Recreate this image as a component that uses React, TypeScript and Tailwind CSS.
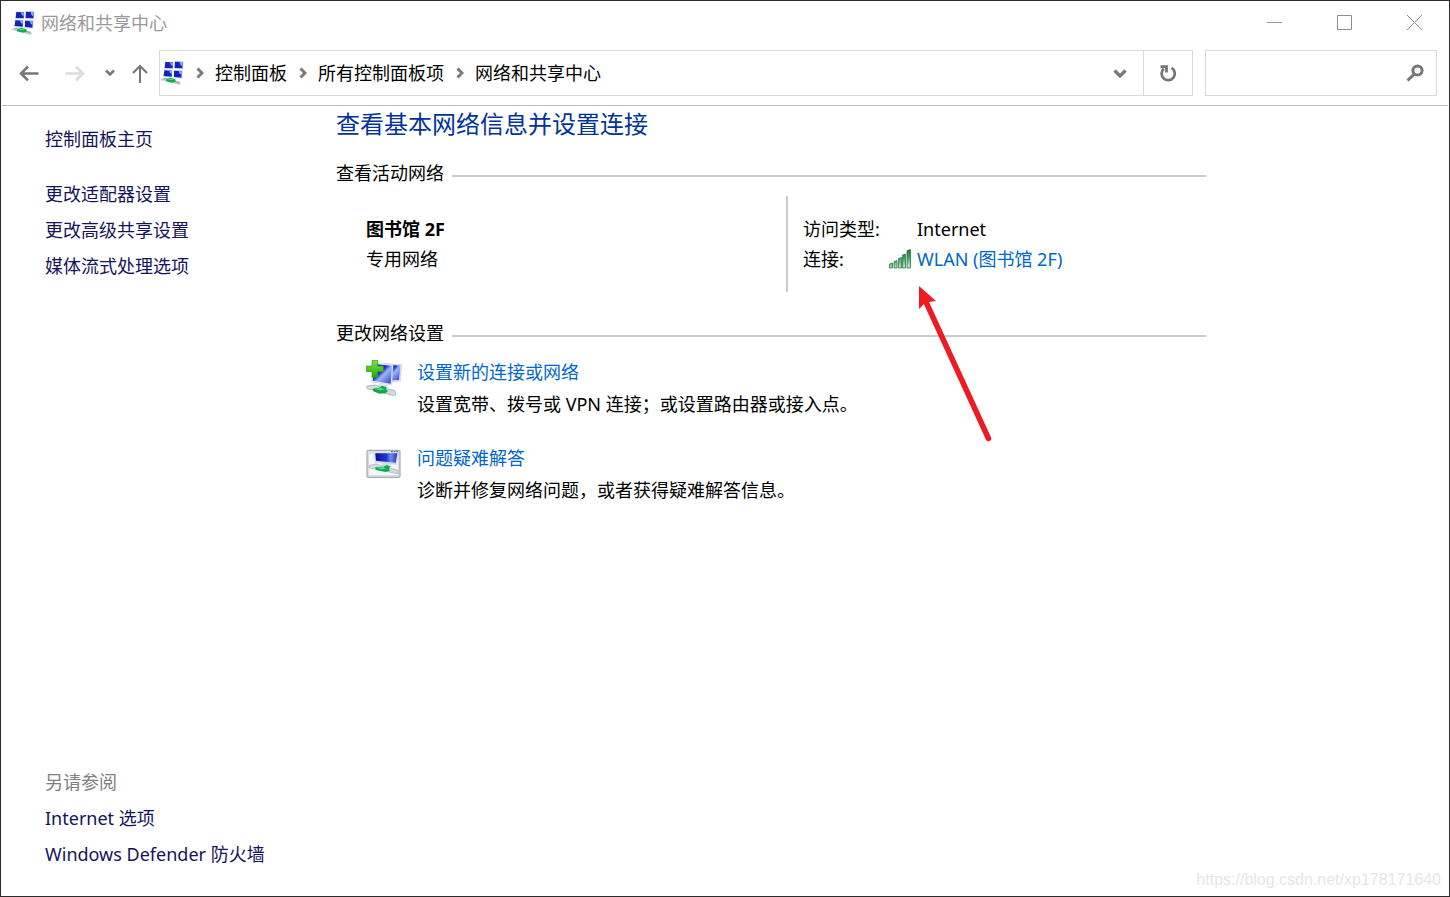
import type { ReactNode } from 'react';

const sideLinks = ['更改适配器设置', '更改高级共享设置', '媒体流式处理选项'];
const seeAlso = ['Internet 选项', 'Windows Defender 防火墙'];
const crumbs = ['控制面板', '所有控制面板项', '网络和共享中心'];

const tasks = [
    { title: '设置新的连接或网络', text: '设置宽带、拨号或 VPN 连接；或设置路由器或接入点。', icon: <NewConnectionIcon /> },
    { title: '问题疑难解答', text: '诊断并修复网络问题，或者获得疑难解答信息。', icon: <TroubleshootIcon /> },
];

function NetworkIcon() {
    return (
        <svg viewBox="0 0 69 72" className="h-6 w-[23px] shrink-0" aria-hidden="true">
            <g fill="#dbe3f3">
                <path d="M11 1l27 2-1 22-28-1zM40 0h28l-2 25-27-1zM9 25l26 2-1 24-28-2zM38 27l28 1-2 25-27-2z" />
            </g>
            <g fill="#1422b8">
                <path d="M13 3l23 1-1 18-24-1zM42 2l24 1-2 19-23-1zM10 28l23 1-1 18-24-2zM39 29l24 1-2 20-22-2z" />
            </g>
            <g fill="#8aa5ee">
                <path d="M27 4l9 1-1 11c-5-2-8-6-8-12zM56 2l10 1-2 13c-5-2-8-7-8-14zM24 28l9 1-1 11c-4-2-8-6-8-12zM53 30l10 1-1 11c-5-2-9-6-9-12z" />
            </g>
            <path d="M0 53l14-3 8 4-3 7-18-3z" fill="#c3caca" />
            <path d="M38 57l20 5 1 8-6 2-19-7z" fill="#c3caca" />
            <path d="M6 53l8-1 3 2-8 1zM46 61l8 2v3l-8-2z" fill="#8e9a9c" />
            <path d="M16 54l13-4 14 5 1 7-12 3-17-4z" fill="#0eae4a" />
            <path d="M20 55l10-2 8 2-7 3z" fill="#58e08a" />
        </svg>
    );
}

function NewConnectionIcon() {
    return (
        <svg viewBox="0 0 108 108" className="h-9 w-9 shrink-0" aria-hidden="true">
            <defs>
                <linearGradient id="screen" x1="0" y1="0" x2="1" y2="1">
                    <stop offset="0" stopColor="#0a14a8" />
                    <stop offset="0.4" stopColor="#1c30c8" />
                    <stop offset="0.55" stopColor="#9db5f4" />
                    <stop offset="1" stopColor="#2440d0" />
                </linearGradient>
                <linearGradient id="plus" x1="0" y1="0" x2="0" y2="1">
                    <stop offset="0" stopColor="#7be34a" />
                    <stop offset="1" stopColor="#25a80f" />
                </linearGradient>
            </defs>
            <path d="M54 10l54 4-5 50-24 2z" fill="#dde2ea" stroke="#b4bcc8" />
            <path d="M58 13l45 4-4 43-22 1z" fill="url(#screen)" />
            <path d="M24 9l58 4-5 63-61-10z" fill="#e6eaf0" stroke="#aeb6c4" />
            <path d="M28 13l50 4-4 54-54-9z" fill="url(#screen)" />
            <path d="M38 71l24 4 4 8-30-3z" fill="#dde2e8" />
            <path d="M1 79l26-4 17 7-6 11-33-6z" fill="#d3dbdb" stroke="#97a4a4" strokeWidth="2" />
            <path d="M54 85l32 6 4 13-8 3-30-9z" fill="#d3dbdb" stroke="#97a4a4" strokeWidth="2" />
            <path d="M20 86l20-3 8-6 14 5-2 6 6 5-7 7-19 1-18-7z" fill="#12a94a" />
            <path d="M27 87l18-3 11 4-14 3z" fill="#5cdc8b" />
            <path d="M18 1h17v17h17v17H35v17H18V35H1V18h17z" fill="url(#plus)" stroke="#2b9c14" strokeWidth="2" />
        </svg>
    );
}

function TroubleshootIcon() {
    return (
        <svg viewBox="0 0 108 108" className="h-9 w-9 shrink-0" aria-hidden="true">
            <defs>
                <linearGradient id="monitor" x1="0" y1="0" x2="1" y2="0">
                    <stop offset="0" stopColor="#0b1292" />
                    <stop offset="0.5" stopColor="#2336cc" />
                    <stop offset="0.7" stopColor="#6d8cea" />
                    <stop offset="1" stopColor="#2237c4" />
                </linearGradient>
            </defs>
            <rect x="3" y="13" width="99" height="81" rx="3" fill="#dde2e8" stroke="#949ca6" strokeWidth="3" />
            <rect x="8" y="22" width="89" height="66" fill="#f4f6f8" stroke="#c3cad1" />
            <path d="M75 17h5M83 17h5M91 17h6" stroke="#4b5563" strokeWidth="3" />
            <path d="M24 22h73l-5 34-66-7z" fill="#cdd4de" />
            <path d="M28 22h66l-5 28-59-6z" fill="url(#monitor)" />
            <path d="M48 51l26 3 4 9-32-4z" fill="#d5dae2" />
            <path d="M9 58l22-4 16 6-3 12-34-6z" fill="#d3dadc" stroke="#a3adb1" strokeWidth="2" />
            <path d="M63 64l33 9v11l-34-8z" fill="#d3dadc" stroke="#a3adb1" strokeWidth="2" />
            <path d="M27 64l24-2 12-5 10 5-4 6 3 6-14 4-28-6z" fill="#0fae4c" />
            <path d="M32 65l20-1 8 4-16 2z" fill="#62df90" />
        </svg>
    );
}

function SignalIcon() {
    return (
        <svg viewBox="0 0 22 20" className="h-5 w-[22px] shrink-0" aria-hidden="true">
            <defs>
                <linearGradient id="bars" gradientUnits="userSpaceOnUse" x1="0" y1="2" x2="3" y2="19">
                    <stop offset="0" stopColor="#0f7434" />
                    <stop offset="0.55" stopColor="#4a9a62" />
                    <stop offset="1" stopColor="#b4dcbc" />
                </linearGradient>
            </defs>
            <g fill="url(#bars)" stroke="#2f7d48" strokeWidth="0.8">
                <path d="M0.500 15l3-1v5h-3zM5 12.500l3-1V19H5zM9.500 9.500l3-1V19h-3zM13.500 6l3-1v14h-3zM18 1.500l3.500-1V19H18z" />
            </g>
        </svg>
    );
}

function ChevronRight() {
    return (
        <span className="flex w-[31px] shrink-0 justify-center">
            <svg viewBox="0 0 8 12" className="h-3 w-2" fill="none" stroke="#7a7a7a" strokeWidth="3" aria-hidden="true">
                <path d="M1.500 1.500L6 6l-4.500 4.500" />
            </svg>
        </span>
    );
}

function SectionTitle({ children }: { children: ReactNode }) {
    return (
        <div className="flex items-center gap-2">
            <h2 className="leading-8">{children}</h2>
            <div className="mt-[6px] h-[2px] flex-1 bg-[#cbcbcb]" />
        </div>
    );
}

export default function App() {
    return (
        <div className="relative flex min-h-screen flex-col border border-[#2b2b2b] bg-white font-['Noto_Sans','Noto_Sans_CJK_SC',sans-serif] text-lg text-black">

            {/* Title bar */}
            <header className="flex h-[43px] items-center pl-[11px] text-[#999999]">
                <NetworkIcon />
                <span className="ml-[6px] flex-1 leading-8">网络和共享中心</span>
                <button aria-label="最小化" className="flex h-full w-[70px] items-center justify-center">
                    <svg viewBox="0 0 15 15" className="h-[15px] w-[15px]" stroke="#999999"><path d="M0 7.500h15" /></svg>
                </button>
                <button aria-label="最大化" className="flex h-full w-[70px] items-center justify-center">
                    <svg viewBox="0 0 15 15" className="h-[15px] w-[15px]" fill="none" stroke="#8c8c8c"><path d="M0.500 0.500h14v14H0.500z" /></svg>
                </button>
                <button aria-label="关闭" className="flex h-full w-[70px] items-center justify-center">
                    <svg viewBox="0 0 15 15" className="h-[15px] w-[15px]" stroke="#8c8c8c"><path d="M0 0l15 15M15 0L0 15" /></svg>
                </button>
            </header>

            {/* Navigation and address bar */}
            <nav className="mx-px flex items-center border-b border-[#c0c0c0] pt-[6px] pr-[11px] pb-[9px] pl-[5px]">
                <button aria-label="后退" className="flex h-10 w-11 items-center justify-center">
                    <svg viewBox="0 0 20 16" className="h-4 w-5" fill="none" stroke="#777777" strokeWidth="2.5"><path d="M19.500 8.500H2M9 1.500l-7 7 7 7" /></svg>
                </button>
                <button aria-label="前进" className="flex h-10 w-12 items-center justify-center">
                    <svg viewBox="0 0 20 16" className="h-4 w-5" fill="none" stroke="#dcdcdc" strokeWidth="2.5"><path d="M0.500 8.500H18M11 1.500l7 7-7 7" /></svg>
                </button>
                <button aria-label="最近浏览的位置" className="flex h-10 w-[22px] items-center justify-center">
                    <svg viewBox="0 0 10 8" className="h-2 w-2.5" fill="none" stroke="#777777" strokeWidth="2.5"><path d="M1 1.500l4 4 4-4" /></svg>
                </button>
                <button aria-label="向上" className="flex h-10 w-[38px] items-center justify-center">
                    <svg viewBox="0 0 16 20" className="h-5 w-4" fill="none" stroke="#777777" strokeWidth="2"><path d="M8 20V3M1 10l7-7 7 7" /></svg>
                </button>

                <div className="flex h-[46px] min-w-0 flex-1 items-center border border-[#d9d9d9] pl-px">
                    <NetworkIcon />
                    {crumbs.map((crumb) => (
                        <div key={crumb} className="flex items-center whitespace-nowrap">
                            <ChevronRight />
                            <a href="#" className="leading-8">{crumb}</a>
                        </div>
                    ))}
                    <button aria-label="展开地址" className="ml-auto flex h-full w-[46px] items-center justify-center">
                        <svg viewBox="0 0 14 10" className="h-2.5 w-3.5" fill="none" stroke="#777777" strokeWidth="3.200"><path d="M1.500 2.500L7 8l5.500-5.500" /></svg>
                    </button>
                    <button aria-label="刷新" className="flex h-full w-[49px] items-center justify-center border-l border-[#d9d9d9]">
                        <svg viewBox="0 0 18 18" className="h-[18px] w-[18px]" fill="none" stroke="#777777" strokeWidth="2.800">
                            <path d="M12.500 3.900A6.600 6.600 0 1 1 4.800 4.700" />
                            <path d="M1.500 2.700h6v5.800" />
                        </svg>
                    </button>
                </div>

                <div className="ml-3 flex h-[46px] w-[232px] items-center border border-[#d9d9d9]">
                    <input type="search" aria-label="搜索控制面板" className="h-full min-w-0 flex-1 pl-2 outline-none" />
                    <button aria-label="搜索" className="flex h-full w-[42px] items-center justify-center">
                        <svg viewBox="0 0 18 18" className="h-[18px] w-[18px]" fill="none" stroke="#777777">
                            <circle cx="11.500" cy="6.500" r="4.600" strokeWidth="3" />
                            <path d="M8.500 9.800l-7 6.700" strokeWidth="3" />
                        </svg>
                    </button>
                </div>
            </nav>

            <div className="flex flex-1">
                {/* Sidebar */}
                <aside className="flex w-[335px] shrink-0 flex-col pt-[15px] pb-6 pl-11 leading-9 text-[#14145a]">
                    <a href="#" className="mb-[19px]">控制面板主页</a>
                    {sideLinks.map((link) => (
                        <a key={link} href="#">{link}</a>
                    ))}
                    <h2 className="mt-auto text-[#808080]">另请参阅</h2>
                    {seeAlso.map((link) => (
                        <a key={link} href="#">{link}</a>
                    ))}
                </aside>

                <main className="mr-6 max-w-[870px] flex-1">
                    <h1 className="text-2xl leading-9 text-[#003399]">查看基本网络信息并设置连接</h1>

                    <section className="mt-[15px]">
                        <SectionTitle>查看活动网络</SectionTitle>
                        <div className="mt-[7px] flex pl-[30px]">
                            <div className="flex-1 py-[18px] leading-[30px]">
                                <p className="font-bold">图书馆 2F</p>
                                <p>专用网络</p>
                            </div>
                            <dl className="grid w-[420px] grid-cols-[86px_1fr] content-start border-l-2 border-[#cbcbcb] py-[18px] pl-[15px] leading-[30px]">
                                <dt>访问类型:</dt>
                                <dd className="pl-7">Internet</dd>
                                <dt>连接:</dt>
                                <dd className="flex items-center gap-[6px]">
                                    <SignalIcon />
                                    <a href="#" className="text-[#0066cc]">WLAN (图书馆 2F)</a>
                                </dd>
                            </dl>
                        </div>
                    </section>

                    <section className="mt-[25px]">
                        <SectionTitle>更改网络设置</SectionTitle>
                        <ul className="mt-[7px] flex flex-col gap-[22px] pl-[30px] leading-8">
                            {tasks.map((task) => (
                                <li key={task.title} className="flex gap-[15px]">
                                    <div className="pt-1">{task.icon}</div>
                                    <div>
                                        <a href="#" className="text-[#0066cc]">{task.title}</a>
                                        <p>{task.text}</p>
                                    </div>
                                </li>
                            ))}
                        </ul>
                    </section>
                </main>
            </div>

            {/* Red pointer towards the WLAN link */}
            <svg viewBox="0 0 76 160" className="pointer-events-none absolute top-[283px] left-[916px] h-40 w-[76px]" aria-hidden="true">
                <path d="M9 18l62.500 136.500" stroke="#ed1c24" strokeWidth="5.500" strokeLinecap="round" />
                <path d="M2 2l17 15-7 1-5 2-5 5z" fill="#ed1c24" />
            </svg>

            <span className="absolute right-2 bottom-1 font-['Liberation_Sans',Arial,sans-serif] text-base text-[#e6e6e6]">
                https://blog.csdn.net/xp178171640
            </span>
        </div>
    );
}
